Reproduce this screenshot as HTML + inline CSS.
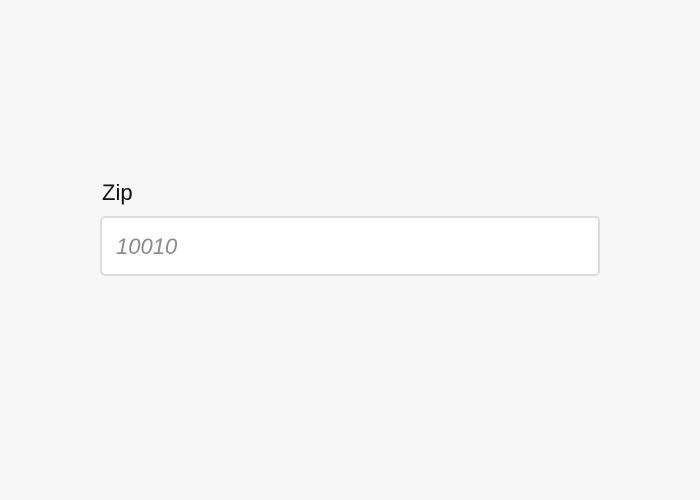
<!DOCTYPE html>
<html><head><style>
html,body{margin:0;padding:0;width:700px;height:500px;background:#f7f7f7;overflow:hidden;}
body{font-family:"Liberation Sans",sans-serif;}
.label{position:absolute;left:102px;top:180px;font-size:22px;color:#111;line-height:26px;}
.box{position:absolute;left:100px;top:216px;width:496px;height:56px;border:2px solid #dcdcdc;border-radius:5px;background:#fff;}
.ph{position:absolute;left:14px;top:16px;font-size:22px;font-style:italic;color:#8a8a8a;line-height:26px;}
</style></head><body>
<div class="label">Zip</div>
<div class="box"><div class="ph">10010</div></div>
</body></html>
